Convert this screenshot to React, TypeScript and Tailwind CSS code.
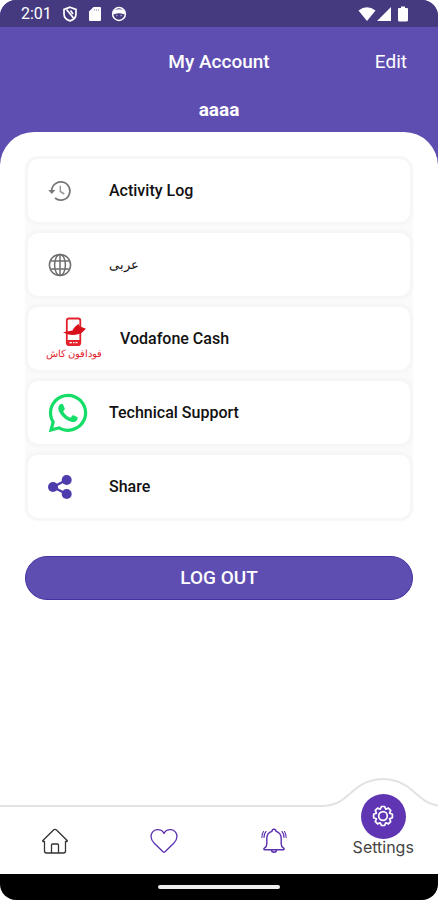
import React from "react";
import { FaWhatsapp } from "react-icons/fa";

function StatusBar() {
  return (
    <div className="flex h-[27px] items-center justify-between bg-[#453a80] pr-[30px] pl-[21px] text-white">
      <div className="flex items-center gap-[11px]">
        <span className="w-[30px] text-[16px] leading-[27px] whitespace-nowrap">2:01</span>
        <svg className="h-4 w-4" viewBox="0 0 16 16" fill="none" stroke="currentColor" strokeWidth="1.7">
          <path d="M8 1.2 14 3.4V8c0 3.3-2.5 5.8-6 6.9C4.500 13.800 2 11.300 2 8V3.400Z" />
          <path d="M4.500 3.500 11.500 12M8.500 4.500 11 8" />
        </svg>
        <svg className="ml-[-2px] h-4 w-4" viewBox="0 0 16 16" fill="currentColor">
          <path d="M6.500 1H13a1 1 0 0 1 1 1v12a1 1 0 0 1-1 1H3a1 1 0 0 1-1-1V5.500Z" />
          <path d="M7.500 3.200v1.600M9.500 3.200v1.600M11.500 3.200v1.600" stroke="#453a80" strokeWidth=".4" />
        </svg>
        <svg className="ml-[-3px] h-4 w-4" viewBox="0 0 16 16" fill="none" stroke="currentColor" strokeWidth="1.500">
          <circle cx="8" cy="8" r="6.400" />
          <path d="M2.500 5.200Q8 2.600 13.500 5.200L13 7.500Q8 5.500 3 7.500Z" fill="currentColor" />
          <path d="M5.500 9.500h.8M9.700 9.500h.8" />
        </svg>
      </div>
      <div className="flex items-center">
        <svg className="h-4 w-[18px]" viewBox="0 0 18 16" fill="currentColor">
          <path d="M.5 4.500Q9-2 17.500 4.500L9 15Z" />
        </svg>
        <svg className="h-4 w-4" viewBox="0 0 16 16" fill="currentColor">
          <path d="M15 1v14H1Z" />
        </svg>
        <svg className="ml-[6px] h-4 w-[10px]" viewBox="0 0 10 16" fill="currentColor">
          <path d="M3 .5h4V2h2a1 1 0 0 1 1 1v11a1.500 1.500 0 0 1-1.500 1.500h-7A1.500 1.500 0 0 1 0 14V3a1 1 0 0 1 1-1h2Z" />
        </svg>
      </div>
    </div>
  );
}

function HistoryIcon() {
  return (
    <svg className="h-6 w-6" viewBox="0 0 24 24" fill="none" stroke="#777" strokeWidth="1.700">
      <path d="M3.700 12A9.100 9.100 0 1 1 7 19" />
      <path d="M.3 11h7L3.800 15Z" fill="#777" stroke="none" />
      <path d="M12.300 6.800v5.700l4 2.500" stroke="#999" strokeWidth="1.500" />
    </svg>
  );
}

function GlobeIcon() {
  return (
    <svg className="h-6 w-6" viewBox="0 0 24 24" fill="none" stroke="#6f6f6f" strokeWidth="1.500">
      <circle cx="12" cy="12" r="10.600" />
      <ellipse cx="12" cy="12" rx="5.400" ry="10.600" />
      <path d="M12 1.400v21.200M2.500 8h19M2.500 16h19" />
    </svg>
  );
}

function ShareIcon() {
  return (
    <svg className="h-6 w-6" viewBox="0 0 24 24" fill="#4d3cab">
      <path d="M19 4.800 5 12l14 7.200" fill="none" stroke="#4d3cab" strokeWidth="2.400" />
      <circle cx="5" cy="12" r="5" />
      <circle cx="18.700" cy="5" r="5" />
      <circle cx="18.700" cy="19" r="5" />
    </svg>
  );
}

function VodafoneLogo() {
  return (
    <span className="flex w-14 flex-col items-center text-[#e3222b]">
      <svg className="h-[30px] w-6" viewBox="0 0 24 30">
        <rect x="4.800" y="1.500" width="13.500" height="26.500" rx="2.200" fill="#fff" stroke="#e3222b" strokeWidth="1.800" />
        <path d="M4.800 23h13.500v4a1.500 1.500 0 0 1-1.500 1.500H6.300A1.500 1.500 0 0 1 4.800 27Z" fill="#e3222b" />
        <path d="M1 15.200 10.500 13.500C12 10.500 14.500 8 16.800 7l.7 2.200 6.500 2.500-4.500 4.300-3.500 1.200C10 18.800 5 17.500 1 15.200Z" fill="#d91019" />
        <path d="M7.500 25.700h2.500M11 25.700h1.500M13.500 25.700h2" stroke="#fff" strokeWidth="1.200" />
      </svg>
      <span dir="rtl" lang="ar" className="text-[10px] leading-[14px] font-medium whitespace-nowrap">فودافون كاش</span>
    </span>
  );
}

const rows = [
  { label: "Activity Log", icon: <HistoryIcon />, slot: "w-[61px]", text: "text-[16px]" },
  { label: "عربى", icon: <GlobeIcon />, slot: "w-[61px]", text: "text-[13px]" },
  { label: "Vodafone Cash", icon: <VodafoneLogo />, slot: "w-[72px] -ml-0.5 mr-0.5", text: "text-[16px]" },
  { label: "Technical Support", icon: <FaWhatsapp size={44} color="#14dd68" className="-ml-0.5" />, slot: "w-[61px]", text: "text-[16px]" },
  { label: "Share", icon: <ShareIcon />, slot: "w-[61px]", text: "text-[16px]" },
];

function Row({ label, icon, slot, text }: (typeof rows)[number]) {
  return (
    <li>
      <button className="flex h-[63px] w-full items-center rounded-[10px] bg-white pl-5 text-left shadow-[0_0_2px_3px_#f6f6f6]">
        <span className={`flex shrink-0 items-center ${slot}`}>
          {icon}
        </span>
        <span className={`leading-5 font-medium text-[#111] ${text}`}>{label}</span>
      </button>
    </li>
  );
}

function HomeIcon() {
  return (
    <svg className="h-7 w-7" viewBox="0 0 28 28" fill="none" stroke="#333" strokeWidth="1.300" strokeLinejoin="round" strokeLinecap="round">
      <path d="M3.500 14.500H2.200c-.6 0-.7-.6-.3-1L12.500 3c.9-.8 2.100-.8 3 0l10.600 10.500c.4.400.3 1-.3 1h-1.300M3.500 14.500V24c0 1.200.8 2 2 2h17c1.200 0 2-.8 2-2v-9.500M10.500 26v-8c0-.6.400-1 1-1h5c.6 0 1 .4 1 1v8" />
    </svg>
  );
}

function HeartIcon() {
  return (
    <svg className="h-7 w-7" viewBox="0 0 28 28" fill="none" stroke="#5b2fae" strokeWidth="1.300" strokeLinejoin="round">
      <path d="M14 6.500C12.500 3.500 9.500 2.500 7 2.700 3.500 3 1 6 1 9.500c0 3 1.500 5 3.500 7L13 24.800c.6.500 1.400.5 2 0l8.500-8.300c2-2 3.500-4 3.500-7 0-3.500-2.500-6.500-6-6.800-2.500-.2-5.500.8-7 3.800Z" />
    </svg>
  );
}

function BellIcon() {
  return (
    <svg className="h-7 w-7" viewBox="0 0 28 28" fill="none" stroke="#5b2fae" strokeWidth="1.400" strokeLinecap="round" strokeLinejoin="round">
      <path d="M12 4.300a2 2 0 0 1 4 0c3.600 1 5.200 3.600 5.200 7.200v5.500c0 1.800.8 3.200 2.400 4.200.9.600.6 1.600-.5 1.600H4.900c-1.100 0-1.400-1-.5-1.600 1.600-1 2.400-2.400 2.400-4.200v-5.500c0-3.600 1.600-6.200 5.200-7.200ZM11.500 22.800c0 3.300 5 3.300 5 0" />
      <path d="M6 4.500C4.500 6 4 8 4 10.500M3.500 4.500C2.200 6.300 1.800 8.300 1.900 10.500M22 4.500c1.500 1.500 2 3.500 2 6M24.500 4.500c1.300 1.800 1.700 3.800 1.600 6" strokeWidth="1.100" />
    </svg>
  );
}

function GearIcon() {
  return (
    <svg className="h-6 w-6" viewBox="0 0 24 24" fill="none" stroke="#fff" strokeWidth="1.700" strokeLinejoin="round">
      <path d="M10.400 1.500h3.200l1.100 2.700 2.700-1.100 2.300 2.300-1.100 2.700 2.800 1.100v3.600l-2.800 1.100 1.100 2.700-2.300 2.300-2.700-1.100-1.100 2.700h-3.200l-1.100-2.700-2.700 1.100-2.300-2.300 1.100-2.700-2.800-1.100V9.200l2.800-1.100-1.100-2.700 2.300-2.300 2.700 1.100Z" />
      <circle cx="12" cy="11" r="4.300" />
    </svg>
  );
}

const navLink = "flex items-center justify-center";

function BottomNav() {
  return (
    <nav className="grid h-[69px] grid-cols-4 border-t-2 border-[#e2e2e2] bg-white">
      <a href="#home" aria-label="Home" className={navLink}>
        <HomeIcon />
      </a>
      <a href="#favourites" aria-label="Favourites" className={navLink}>
        <HeartIcon />
      </a>
      <a href="#notifications" aria-label="Notifications" className={navLink}>
        <BellIcon />
      </a>
      <a href="#settings" className="relative -mt-[13px] flex flex-col items-center">
        <svg className="absolute top-[-17px] left-1/2 h-9 w-[124px] -translate-x-1/2" viewBox="0 0 124 36">
          <path d="M0 29C16 29 22 23 32 14 42 5 51 2 62 2s20 3 30 12c10 9 16 15 32 15v7H0Z" fill="#fff" />
          <path d="M0 29C16 29 22 23 32 14 42 5 51 2 62 2s20 3 30 12c10 9 16 15 32 15" fill="none" stroke="#e2e2e2" strokeWidth="2" />
        </svg>
        <span className="relative flex h-[45px] w-[45px] shrink-0 items-center justify-center rounded-full bg-[#6035b3]">
          <GearIcon />
        </span>
        <span className="relative text-[16px] leading-4 text-[#444] font-[Inter,sans-serif]">Settings</span>
      </a>
    </nav>
  );
}

export default function App() {
  return (
    <div className="flex min-h-screen flex-col overflow-hidden rounded-2xl bg-white font-[Roboto,'Noto_Sans',sans-serif]">
      <header className="bg-[#5e4eb2] text-white">
        <StatusBar />
        <div className="grid grid-cols-3 items-center pt-[23px]">
          <h1 className="col-start-2 text-center text-[19px] leading-6 font-medium whitespace-nowrap">My Account</h1>
          <button className="mr-[31px] justify-self-end text-[19px] leading-6">Edit</button>
        </div>
        <p className="pt-6 pb-[10px] text-center text-[19px] leading-6 font-bold">aaaa</p>
      </header>
      <div className="flex flex-1 flex-col bg-[linear-gradient(#5e4eb2_32px,#fff_32px)]">
        <main className="flex-1 rounded-t-[34px] bg-white px-[25px] pt-[27px]">
          <ul className="flex flex-col gap-[11px] rounded-[10px] bg-[#fafafa] px-[3px]">
            {rows.map((row) => (
              <Row key={row.label} {...row} />
            ))}
          </ul>
          <button className="mt-[38px] h-11 w-full rounded-full border border-[#4930a0] bg-[#5e4eb2] text-[19px] leading-6 font-medium text-white">
            LOG OUT
          </button>
        </main>
      </div>
      <BottomNav />
      <div className="flex h-[26px] items-center justify-center bg-black">
        <div className="h-1 w-[122px] rounded-full bg-[#eee]" />
      </div>
    </div>
  );
}
